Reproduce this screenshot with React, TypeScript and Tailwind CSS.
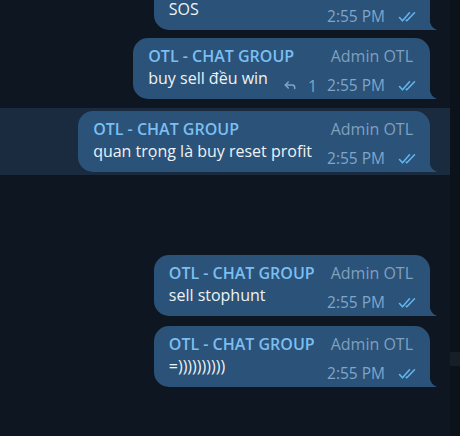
import { Reply } from "lucide-react"

type Msg = {
  text: string
  reply?: number
}

function Checks() {
  return (
    <svg width="20" height="12" viewBox="0 0 20 12" fill="none" className="text-[#63b3ee]">
      <path d="M1.5 6.5 L4.5 9.8 L11.5 1.8" stroke="currentColor" strokeWidth="1.6" strokeLinecap="round" strokeLinejoin="round" />
      <path d="M8.2 9.2 L8.8 9.8 L16.5 1.8" stroke="currentColor" strokeWidth="1.6" strokeLinecap="round" strokeLinejoin="round" />
    </svg>
  )
}

function Tail() {
  return (
    <svg
      width="8"
      height="13"
      viewBox="0 0 8 13"
      className="absolute -right-[7px] bottom-0 text-[#2b5278]"
    >
      <path d="M0 0 Q0.8 10.5 8 13 L0 13 Z" fill="currentColor" />
    </svg>
  )
}

function Bubble({ msg, className = "" }: { msg: Msg; className?: string }) {
  return (
    <div className={`relative rounded-[15px] rounded-br-none bg-[#2b5278] pl-[15px] pr-[12px] pt-[7px] pb-[5px] ${className}`}>
      <div className="flex items-start justify-between gap-[16px] pr-[5px] text-[16px] leading-[22px]">
        <span className="font-semibold text-[#7bbff2]">OTL - CHAT GROUP</span>
        <span className="text-[#7fa0bf]">Admin OTL</span>
      </div>
      <div className="flex items-start gap-[15px]">
        <span className="text-[16px] leading-[22px] text-[#eef2f6]">{msg.text}</span>
        <div className="ml-auto mt-[11px] flex h-[16px] items-center gap-[13px] text-[15.5px] text-[#7ea6cc]">
          <div className="flex items-center gap-[10px]">
            {msg.reply ? (
              <span className="flex items-center gap-[11px]">
                <Reply size={14} strokeWidth={2.6} className="-mt-[3px]" />
                <span className="text-[16px]">{msg.reply}</span>
              </span>
            ) : null}
            <span>2:55 PM</span>
          </div>
          <Checks />
        </div>
      </div>
      <Tail />
    </div>
  )
}

export default function App() {
  return (
    <div className="flex h-[436px] w-[460px] overflow-hidden bg-[#0e1621] font-['Open_Sans',sans-serif]">
      <div className="flex flex-1 flex-col items-end">
        <div className="pr-[20px]">
          <Bubble msg={{ text: "SOS" }} className="mt-[-31px]" />
        </div>
        <div className="pr-[20px]">
          <Bubble msg={{ text: "buy sell đều win", reply: 1 }} className="mt-[8px]" />
        </div>
        <div className="mt-[9px] flex w-full justify-end bg-[#1a2a3f] py-[3px] pr-[20px]">
          <Bubble msg={{ text: "quan trọng là buy reset profit" }} />
        </div>
        <div className="mt-[80px] pr-[20px]">
          <Bubble msg={{ text: "sell stophunt" }} />
        </div>
        <div className="mt-[10px] pr-[20px]">
          <Bubble msg={{ text: "=))))))))))" }} />
        </div>
      </div>
      <div className="flex w-[10px] flex-col bg-[#0c121a]">
        <div className="mt-[352px] h-[14px] w-full bg-[#161e28]" />
      </div>
    </div>
  )
}
